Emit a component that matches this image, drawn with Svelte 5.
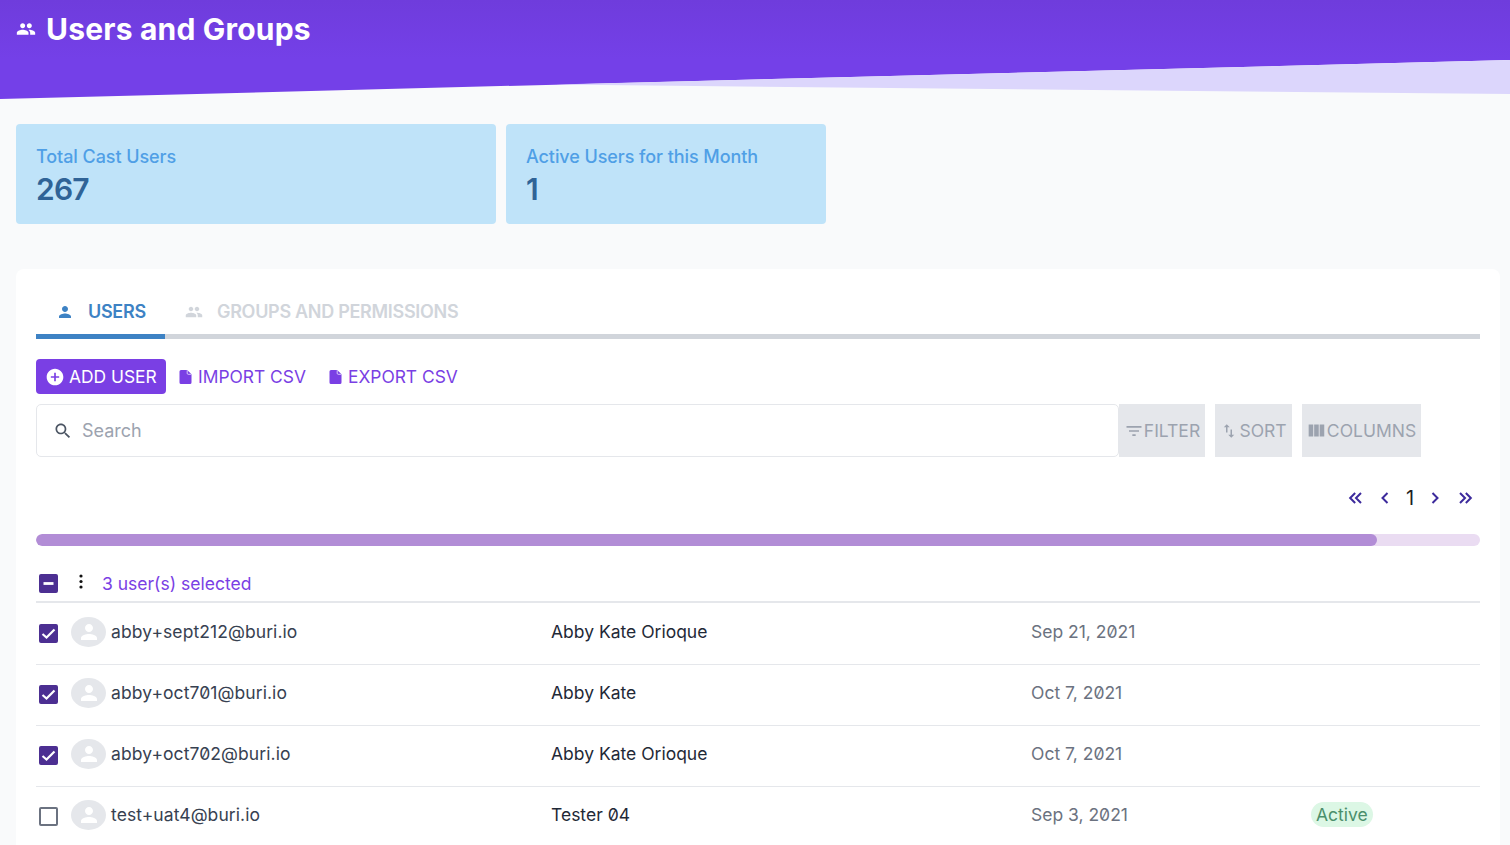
<script>
  const rows = [
    { email: 'abby+sept212@buri.io', name: 'Abby Kate Orioque', date: 'Sep 21, 2021', checked: true, status: '' },
    { email: 'abby+oct701@buri.io', name: 'Abby Kate', date: 'Oct 7, 2021', checked: true, status: '' },
    { email: 'abby+oct702@buri.io', name: 'Abby Kate Orioque', date: 'Oct 7, 2021', checked: true, status: '' },
    { email: 'test+uat4@buri.io', name: 'Tester 04', date: 'Sep 3, 2021', checked: false, status: 'Active' }
  ];
  const group = 'M16 11c1.66 0 2.99-1.34 2.99-3S17.66 5 16 5s-3 1.34-3 3 1.34 3 3 3zm-8 0c1.66 0 2.99-1.34 2.99-3S9.66 5 8 5 5 6.34 5 8s1.34 3 3 3zm0 2c-2.33 0-7 1.17-7 3.5V19h14v-2.5c0-2.33-4.67-3.5-7-3.5zm8 0c-.29 0-.62.02-.97.05 1.16.84 1.97 1.97 1.97 3.45V19h6v-2.5c0-2.33-4.67-3.5-7-3.5z';
  const person = 'M12 12c2.21 0 4-1.79 4-4s-1.79-4-4-4-4 1.79-4 4 1.79 4 4 4zm0 2c-2.67 0-8 1.34-8 4v2h16v-2c0-2.66-5.33-4-8-4z';
  const file = 'M2 0h6.2l4.3 4.3v8.2a1.5 1.5 0 0 1-1.5 1.5H2a1.5 1.5 0 0 1-1.5-1.5v-11A1.5 1.5 0 0 1 2 0z';
</script>

<div class="page">
  <header class="hero">
    <svg class="wave" viewBox="0 0 1510 99" preserveAspectRatio="none" aria-hidden="true">
      <defs>
        <linearGradient id="heroFill" x1="0" y1="0" x2="0" y2="1">
          <stop offset="0" stop-color="#6f3cdc" />
          <stop offset="0.6" stop-color="#7440e8" />
        </linearGradient>
      </defs>
      <polygon points="0,0 1510,0 1510,60 0,99" fill="url(#heroFill)" />
      <polygon points="556,84.6 1510,60 1510,94" fill="#dcd6fc" />
    </svg>
    <h1>
      <svg class="title-icon" viewBox="0 0 24 24"><path d={group} /></svg>
      Users and Groups
    </h1>
  </header>

  <main>
    <section class="stats">
      <div class="stat wide"><span>Total Cast Users</span><strong>267</strong></div>
      <div class="stat narrow"><span>Active Users for this Month</span><strong>1</strong></div>
    </section>

    <section class="panel">
      <nav class="tabs">
        <div class="tab active">
          <svg viewBox="0 0 24 24"><path d={person} /></svg>USERS
        </div>
        <div class="tab">
          <svg viewBox="0 0 24 24"><path d={group} /></svg>GROUPS AND PERMISSIONS
        </div>
      </nav>

      <div class="actions">
        <button class="primary">
          <svg viewBox="0 0 24 24"><path d="M12 2C6.48 2 2 6.48 2 12s4.48 10 10 10 10-4.48 10-10S17.52 2 12 2zm5 11h-4v4h-2v-4H7v-2h4V7h2v4h4v2z" /></svg>
          ADD USER
        </button>
        <button class="link"><svg viewBox="0 0 13 14"><path d={file} /><path class="fold" d="M8.2.3v3a1 1 0 0 0 1 1h3" /></svg>IMPORT CSV</button>
        <button class="link"><svg viewBox="0 0 13 14"><path d={file} /><path class="fold" d="M8.2.3v3a1 1 0 0 0 1 1h3" /></svg>EXPORT CSV</button>
      </div>

      <div class="toolbar">
        <label class="search">
          <svg viewBox="0 0 24 24"><path d="M15.5 14h-.79l-.28-.27C15.41 12.59 16 11.11 16 9.5 16 5.91 13.09 3 9.5 3S3 5.91 3 9.5 5.91 16 9.5 16c1.61 0 3.09-.59 4.23-1.57l.27.28v.79l5 4.99L20.49 19l-4.99-5zm-6 0C7.01 14 5 11.99 5 9.5S7.01 5 9.5 5 14 7.01 14 9.5 11.99 14 9.5 14z" /></svg>
          <input placeholder="Search" />
        </label>
        <button class="tool filter"><svg viewBox="0 0 24 24"><path d="M10 18h4v-2h-4v2zM3 6v2h18V6H3zm3 7h12v-2H6v2z" /></svg>FILTER</button>
        <button class="tool sort"><svg viewBox="0 0 24 24"><path d="M9 3 5 7h3v7h2V7h3L9 3zm7 14v-7h-2v7h-3l4 4 4-4h-3z" /></svg>SORT</button>
        <button class="tool cols"><svg viewBox="0 0 24 24"><path d="M10 18h5V5h-5v13zm-6 0h5V5H4v13zM16 5v13h5V5h-5z" /></svg>COLUMNS</button>
      </div>

      <div class="pager">
        <svg class="first" viewBox="0 0 24 24"><path d="M11 6 5 12l6 6M18 6l-6 6 6 6" /></svg>
        <svg viewBox="0 0 24 24"><path d="M15 6l-6 6 6 6" /></svg>
        <span>1</span>
        <svg viewBox="0 0 24 24"><path d="M9 6l6 6-6 6" /></svg>
        <svg viewBox="0 0 24 24"><path d="M6 6l6 6-6 6M13 6l6 6-6 6" /></svg>
      </div>

      <div class="progress"><div class="fill" style="width: 92.87%"></div></div>

      <div class="select-row">
        <span class="box on"><svg viewBox="0 0 15 15"><path class="dash" d="M2.5 7.5h10" /></svg></span>
        <svg class="dots" viewBox="0 0 4 15"><circle cx="2" cy="2" r="1.6" /><circle cx="2" cy="7.5" r="1.6" /><circle cx="2" cy="13" r="1.6" /></svg>
        <span class="selected">3 user(s) selected</span>
      </div>

      <div class="rows">
        {#each rows as row}
          <div class="row">
            <div class="user">
              <span class="box" class:on={row.checked}>
                {#if row.checked}<svg viewBox="0 0 15 15"><path d="M1.5 8l4 3.5 8-8" /></svg>{/if}
              </span>
              <span class="avatar"><svg viewBox="0 0 24 24"><path d={person} /></svg></span>
              <span class="email">{row.email}</span>
            </div>
            <div class="name">{row.name}</div>
            <div class="date">{row.date}</div>
            <div>{#if row.status}<span class="badge">{row.status}</span>{/if}</div>
          </div>
        {/each}
      </div>
    </section>
  </main>
</div>

<style>
  :global(body) {
    margin: 0;
    background: #f9fafb;
    font-family: Inter, "Noto Sans", sans-serif;
    overflow: hidden;
  }
  svg { display: block; fill: currentColor; flex: none; }
  button { font: inherit; border: 0; background: none; cursor: pointer; padding: 0; }

  .page { height: 845px; overflow: hidden; }

  .hero { position: relative; height: 99px; }
  .wave { position: absolute; inset: 0; width: 100%; height: 100%; }
  h1 {
    position: relative;
    margin: 0;
    padding: 11px 16px 0;
    display: flex;
    align-items: center;
    gap: 10px;
    color: #fff;
    font-size: 30px;
    line-height: 36px;
    font-weight: 700;
    letter-spacing: 0.2px;
  }
  .title-icon { width: 20px; height: 20px; }

  main { padding: 25px 10px 0 16px; }

  .stats { display: flex; gap: 10px; margin-bottom: 45px; }
  .stat {
    height: 100px;
    box-sizing: border-box;
    padding: 20px 20px 0;
    background: #bfe3f9;
    border-radius: 4px;
    display: flex;
    flex-direction: column;
  }
  .wide { width: 480px; }
  .narrow { width: 320px; }
  .stat span { color: #4f9fe6; font-size: 18px; line-height: 26px; font-weight: 500; letter-spacing: -0.08px; }
  .stat strong { color: #2f6397; font-size: 30px; line-height: 36px; font-weight: 600; margin-top: 1px; letter-spacing: -0.8px; }

  .panel { background: #fff; border-radius: 8px; padding: 20px 20px 0; height: 600px; box-sizing: border-box; }

  .tabs { display: flex; border-bottom: 5px solid #d1d5db; height: 50px; box-sizing: border-box; }
  .tab {
    display: flex;
    align-items: center;
    gap: 14px;
    height: 50px;
    box-sizing: border-box;
    padding: 0 20px;
    border-bottom: 5px solid transparent;
    color: #d1d5db;
    font-size: 18px;
    font-weight: 600;
    letter-spacing: -0.3px;
  }
  .tab svg { width: 18px; height: 18px; }
  .tab.active { color: #3d82c4; border-bottom-color: #3d82c4; width: 129px; padding-right: 0; }

  .actions { display: flex; align-items: center; gap: 13px; margin-top: 20px; height: 35px; font-size: 17.4px; }
  .primary {
    display: flex; align-items: center; gap: 4px;
    height: 35px; width: 130px; padding-left: 9px; box-sizing: border-box;
    background: #7a3fe4; color: #fff; border-radius: 4px;
  }
  .primary svg { width: 20px; height: 20px; }
  .link { display: flex; align-items: center; gap: 6px; color: #7a3fe4; margin-right: 10px; }
  .link svg { width: 13px; height: 14px; }
  .fold { fill: none; stroke: #fff; stroke-width: 0.7; }

  .toolbar { display: flex; margin-top: 10px; height: 53px; }
  .search {
    width: 1083px; box-sizing: border-box;
    display: flex; align-items: center; gap: 7px;
    padding-left: 16px;
    border: 1px solid #e5e7eb; border-radius: 5px;
    color: #4b5563;
  }
  .search svg { width: 20px; height: 20px; }
  input {
    flex: 1; border: 0; outline: 0; font: inherit; font-size: 18px; background: none; min-width: 0;
  }
  input::placeholder { color: #9ca3af; opacity: 1; }
  .tool {
    display: flex; align-items: center; justify-content: center;
    background: #e5e7eb; color: #9ca3af; font-size: 17.5px; height: 53px; margin-right: 10px;
  }
  .filter { width: 86px; }
  .filter svg { width: 20px; height: 20px; }
  .sort { width: 77px; gap: 1px; }
  .sort svg { width: 18px; height: 18px; }
  .cols { width: 119px; padding-right: 2px; }
  .cols svg { width: 22px; height: 22px; }

  .pager {
    display: flex; align-items: center; justify-content: flex-end;
    height: 24px; margin-top: 29px; padding-right: 5px;
    gap: 10px; color: #3c2a9c;
  }
  .pager svg { width: 20px; height: 20px; fill: none; stroke: currentColor; stroke-width: 2.4; }
  .pager svg.first { margin-right: -1px; }
  .pager span { color: #1f1f1f; font-size: 20px; width: 10px; text-align: center; }

  .progress { height: 12px; margin-top: 24px; border-radius: 6px; background: #eadcf2; overflow: hidden; }
  .fill { height: 100%; background: #b28dd6; border-radius: 6px; }

  .select-row {
    display: flex; align-items: center; height: 57px; box-sizing: border-box;
    border-bottom: 2px solid #e5e7eb; padding: 20px 0 0 3px;
  }
  .dots { width: 4px; height: 15px; color: #111; margin: -4px 0 0 21px; }
  .selected { color: #7a3fe4; font-size: 17.5px; margin-left: 19px; }

  .box {
    width: 19px; height: 19px; border-radius: 2px; box-sizing: border-box;
    border: 2px solid #6b7280; display: block; flex: none;
  }
  .box.on { background: #4c2f92; border-color: #4c2f92; }
  .box svg { width: 15px; height: 15px; fill: none; stroke: #fff; stroke-width: 2.2; }
  .box .dash { stroke-width: 2.8; }

  .rows { padding-top: 1px; }
  .row {
    display: grid;
    grid-template-columns: 515px 480px 280px 1fr;
    align-items: center;
    height: 61px;
    box-sizing: border-box;
    padding-bottom: 6px;
    border-bottom: 1px solid #e5e7eb;
    font-size: 17.5px;
  }
  .user { display: flex; align-items: center; padding-left: 3px; }
  .user .box { margin-top: 5px; }
  .avatar {
    width: 35px; height: 30px; border-radius: 50%;
    background: #e5e7eb; color: #fff; margin: 2px 0 0 13px;
    display: flex; align-items: center; justify-content: center;
  }
  .avatar svg { width: 24px; height: 24px; }
  .email { color: #374151; margin-left: 5px; letter-spacing: 0.08px; }
  .name { color: #1f2937; }
  .date { color: #6b7280; }
  .badge {
    display: inline-block; padding: 0 5px; line-height: 25px;
    background: #dcf7e5; color: #4b8f6b; border-radius: 13px;
  }
  .email, .name, .date, .selected { font-feature-settings: "zero" 1; }
</style>
